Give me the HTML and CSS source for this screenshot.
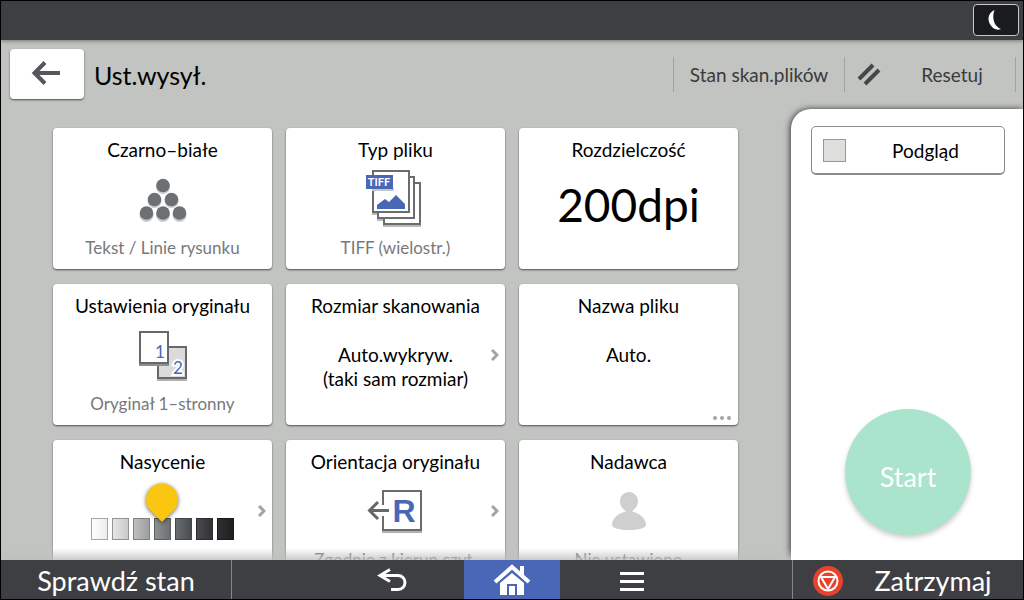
FILE: index.html
```html
<!DOCTYPE html>
<html lang="pl">
<head>
<meta charset="utf-8">
<title>Ust.wysył.</title>
<link rel="stylesheet" href="styles.css">
</head>
<body>
<div class="screen">
  <div class="statusbar">
    <button class="sleep" aria-label="Tryb uśpienia">
      <svg width="16" height="22" viewBox="0 0 16 22"><path d="M6.500 1C0 4 -1 11 2.500 16C5 20.500 9.500 21.500 13 20C6 17.500 3.500 8.500 6.500 1Z" fill="#fff"/></svg>
    </button>
  </div>

  <header class="header">
    <button class="back" aria-label="Wstecz">
      <svg width="34" height="26" viewBox="0 0 34 26" fill="none" stroke="#55575a" stroke-width="4"><path d="M30 12H5M15 1.500L4.500 12L15 22.500"/></svg>
    </button>
    <h1 class="title">Ust.wysył.</h1>
    <div class="tools">
      <button class="tool">Stan skan.plików</button>
      <button class="tool tool-reset">
        <svg width="24" height="24" viewBox="0 0 24 24" stroke="#454647" stroke-width="4"><path d="M2 16L16 2M8 21L22 7"/></svg>
        <span class="tool-label">Resetuj</span>
      </button>
    </div>
  </header>

  <main class="main">
    <section class="settings">
      <button class="card">
        <span class="card-title">Czarno–białe</span>
        <span class="card-body">
          <svg width="52" height="48" viewBox="0 0 52 48">
            <g fill="#c9caca"><circle cx="26" cy="12" r="7"/><circle cx="17.500" cy="26" r="7"/><circle cx="34.500" cy="26" r="7"/><circle cx="9.500" cy="40" r="7"/><circle cx="26" cy="40" r="7"/><circle cx="42.500" cy="40" r="7"/></g>
            <g fill="#6c7072"><circle cx="26" cy="10.500" r="6.800"/><circle cx="17.500" cy="24.500" r="6.800"/><circle cx="34.500" cy="24.500" r="6.800"/><circle cx="9.500" cy="38" r="6.800"/><circle cx="26" cy="38" r="6.800"/><circle cx="42.500" cy="38" r="6.800"/></g>
          </svg>
        </span>
        <span class="card-note">Tekst / Linie rysunku</span>
      </button>

      <button class="card">
        <span class="card-title">Typ pliku</span>
        <span class="card-body">
          <svg width="62" height="60" viewBox="1 1 62 60">
            <g fill="#b9baba"><rect x="19" y="56" width="38" height="3"/><rect x="13" y="50" width="38" height="3"/><rect x="8" y="44" width="38" height="3"/></g>
            <g fill="#fff" stroke="#6a6c6e" stroke-width="2"><rect x="20" y="15" width="36" height="41"/><rect x="14" y="9" width="36" height="41"/><rect x="9" y="3" width="36" height="41"/></g>
            <path d="M13 41V37L21 31L25 34L32 27L41 36V41Z" fill="#4a67b7"/>
            <rect x="8" y="20" width="22" height="3" fill="#c5c6c6"/>
            <rect x="2" y="7" width="27" height="14" fill="#4a67b7"/>
            <text class="badge-text" x="15" y="18" text-anchor="middle">TIFF</text>
          </svg>
        </span>
        <span class="card-note">TIFF (wielostr.)</span>
      </button>

      <button class="card">
        <span class="card-title">Rozdzielczość</span>
        <span class="card-body card-big">200dpi</span>
        <span class="card-note"></span>
      </button>

      <button class="card">
        <span class="card-title">Ustawienia oryginału</span>
        <span class="card-body">
          <svg width="50" height="52" viewBox="0 0 50 52">
            <rect x="19" y="49" width="30" height="3" fill="#b0b1b1"/>
            <rect x="20" y="18" width="28" height="31" fill="#dadbda" stroke="#66686b" stroke-width="2"/>
            <rect x="1" y="33" width="30" height="4" fill="#8d8f90"/>
            <rect x="2" y="3" width="28" height="31" fill="#fff" stroke="#66686b" stroke-width="2"/>
            <text class="page-no" x="22" y="29" text-anchor="middle">1</text>
            <text class="page-no page-no-back" x="40" y="45" text-anchor="middle">2</text>
          </svg>
        </span>
        <span class="card-note">Oryginał 1–stronny</span>
      </button>

      <button class="card">
        <span class="card-title">Rozmiar skanowania</span>
        <span class="card-body card-value">Auto.wykryw.<br>(taki sam rozmiar)</span>
        <span class="card-note"></span>
        <svg class="chevron" width="8" height="12" viewBox="0 0 8 12"><path d="M1 1L6 6L1 11"/></svg>
      </button>

      <button class="card">
        <span class="card-title">Nazwa pliku</span>
        <span class="card-body card-value">Auto.</span>
        <span class="card-note"></span>
        <svg class="more" width="18" height="4" viewBox="0 0 18 4" fill="#a3a4a4"><circle cx="2" cy="2" r="2"/><circle cx="9" cy="2" r="2"/><circle cx="16" cy="2" r="2"/></svg>
      </button>

      <button class="card">
        <span class="card-title">Nasycenie</span>
        <span class="card-body">
          <svg width="148" height="64" viewBox="0 0 148 64">
            <defs>
              <linearGradient id="d1"><stop offset="0" stop-color="#fff"/><stop offset="1" stop-color="#ececec"/></linearGradient>
              <linearGradient id="d2"><stop offset="0" stop-color="#e6e6e5"/><stop offset="1" stop-color="#c8c9c8"/></linearGradient>
              <linearGradient id="d3"><stop offset="0" stop-color="#c0c1c1"/><stop offset="1" stop-color="#9a9c9d"/></linearGradient>
              <linearGradient id="d4"><stop offset="0" stop-color="#8f9293"/><stop offset="1" stop-color="#6c6f72"/></linearGradient>
              <linearGradient id="d5"><stop offset="0" stop-color="#6a6e71"/><stop offset="1" stop-color="#484b4f"/></linearGradient>
              <linearGradient id="d6"><stop offset="0" stop-color="#4a4c4f"/><stop offset="1" stop-color="#303134"/></linearGradient>
              <linearGradient id="d7"><stop offset="0" stop-color="#303032"/><stop offset="1" stop-color="#1e1e1f"/></linearGradient>
            </defs>
            <rect x="2.500" y="39.500" width="16" height="21" fill="url(#d1)" stroke="#a4a5a5"/>
            <rect x="23.500" y="39.500" width="16" height="21" fill="url(#d2)" stroke="#929393"/>
            <rect x="44.500" y="39.500" width="16" height="21" fill="url(#d3)" stroke="#7e8081"/>
            <rect x="65.500" y="39.500" width="16" height="21" fill="url(#d4)" stroke="#5c5f61"/>
            <rect x="86.500" y="39.500" width="16" height="21" fill="url(#d5)" stroke="#434649"/>
            <rect x="107.500" y="39.500" width="16" height="21" fill="url(#d6)" stroke="#2b2c2e"/>
            <rect x="128.500" y="39.500" width="16" height="21" fill="url(#d7)" stroke="#1b1b1c"/>
            <path class="pin" d="M73 43L61 31C57 27 57 22 57 20.500A16 16 0 0 1 89 20.500C89 24 88 28 85 31Z"/>
          </svg>
        </span>
        <span class="card-note"></span>
        <svg class="chevron" width="8" height="12" viewBox="0 0 8 12"><path d="M1 1L6 6L1 11"/></svg>
      </button>

      <button class="card">
        <span class="card-title">Orientacja oryginału</span>
        <span class="card-body">
          <svg width="60" height="44" viewBox="0 0 60 44">
            <rect x="16" y="41" width="40" height="3" fill="#b0b1b1"/>
            <path d="M17 16V2H55V41H17V27" fill="none" stroke="#6a6c6e" stroke-width="2"/>
            <path d="M23 21.500H4M12 13L3.500 21.500L12 30" fill="none" stroke="#66686b" stroke-width="3"/>
            <text class="letter-r" x="38" y="33" text-anchor="middle">R</text>
          </svg>
        </span>
        <span class="card-note">Zgodnie z kierun.czyt.</span>
        <svg class="chevron" width="8" height="12" viewBox="0 0 8 12"><path d="M1 1L6 6L1 11"/></svg>
      </button>

      <button class="card">
        <span class="card-title">Nadawca</span>
        <span class="card-body">
          <svg width="36" height="40" viewBox="0 0 36 40" fill="#cfcfcf"><path d="M18 1C13 1 9 5 9 10C9 15 12 18 15 20.500C8 22 1 27 1 34C1 37.500 9 39 18 39S35 37.500 35 34C35 27 28 22 21 20.500C24 18 27 15 27 10C27 5 23 1 18 1Z"/></svg>
        </span>
        <span class="card-note">Nie ustawiono</span>
      </button>
    </section>

    <aside class="panel">
      <label class="preview"><input class="preview-box" type="checkbox"><span class="preview-label">Podgląd</span></label>
      <button class="start">Start</button>
    </aside>
  </main>

  <footer class="footer">
    <button class="foot-side foot-left">Sprawdź stan</button>
    <nav class="nav">
      <button class="nav-button" aria-label="Powrót">
        <svg width="32" height="24" viewBox="0 0 32 24" fill="none" stroke="#fff" stroke-width="3"><path d="M4 7.500H22A7 7 0 0 1 22 21.500H15M14 1.500L4 7.500L14 13.500"/></svg>
      </button>
      <button class="nav-button nav-home" aria-label="Ekran główny">
        <svg width="38" height="32" viewBox="0 0 38 32"><path d="M2 18L19 3L36 18" fill="none" stroke="#fff" stroke-width="4"/><rect x="27" y="2" width="4" height="9" fill="#fff"/><path d="M19 9L31 19V31H24V20H14V31H7V19ZM16 22H22V31H16Z" fill="#fff" fill-rule="evenodd"/></svg>
      </button>
      <button class="nav-button" aria-label="Menu">
        <svg width="24" height="22" viewBox="0 0 24 22" fill="#fff"><rect y="3" width="24" height="3"/><rect y="11" width="24" height="3"/><rect y="19" width="24" height="3"/></svg>
      </button>
    </nav>
    <button class="foot-side foot-right">
      <svg width="30" height="30" viewBox="0 0 30 30" fill="none" stroke="#fff" stroke-width="2"><circle cx="15" cy="15" r="15" fill="#e8432a" stroke="none"/><circle cx="15" cy="15" r="9.500"/><path d="M8 11H22L15 23Z"/></svg>
      <span class="foot-label">Zatrzymaj</span>
    </button>
  </footer>
</div>
</body>
</html>
```

FILE: styles.css
```css
* { box-sizing: border-box; }

body {
  margin: 0;
  font-family: Lato, "Noto Sans", sans-serif;
  font-size: 19px;
  color: #111;
}

button {
  margin: 0;
  padding: 0;
  border: 0;
  background: none;
  color: inherit;
  font: inherit;
  cursor: pointer;
}

svg { display: block; flex: none; }

.screen {
  display: flex;
  flex-direction: column;
  height: 100vh;
  border: 1px solid #000;
  background: #c2c4c1;
  overflow: hidden;
}

.statusbar {
  display: flex;
  flex: none;
  justify-content: flex-end;
  align-items: center;
  height: 39px;
  padding: 0 4px 2px;
  background: #3e3f42;
  box-shadow: 0 1px 4px rgba(0, 0, 0, 0.4);
}

.sleep {
  display: flex;
  justify-content: center;
  align-items: center;
  width: 46px;
  height: 32px;
  border: 1px solid #c8c8c8;
  border-radius: 4px;
  background: #1a1b1d;
}

.header {
  display: flex;
  flex: none;
  align-items: center;
  height: 69px;
  padding: 0 7px 0 9px;
}

.back {
  display: flex;
  justify-content: center;
  align-items: center;
  width: 74px;
  height: 50px;
  margin-bottom: 2px;
  border-radius: 4px;
  background: #fff;
  box-shadow: 0 1px 2px rgba(0, 0, 0, 0.6);
}

.title {
  margin: 0 auto 0 10px;
  font-size: 25px;
  font-weight: 400;
  color: #000;
}

.tools {
  display: flex;
  border-right: 1px solid #a2a4a2;
}

.tool {
  width: 171px;
  height: 35px;
  border-left: 1px solid #a2a4a2;
  color: #3a3b3c;
}

.tool-reset {
  display: flex;
  align-items: center;
  padding: 0 12px;
}

.tool-label { flex: 1; padding-left: 20px; }

.main {
  display: flex;
  flex: 1;
  min-height: 0;
}

.settings {
  position: relative;
  display: grid;
  flex: 1;
  grid-template-columns: repeat(3, 1fr);
  grid-auto-rows: 141px;
  gap: 15px 14px;
  padding: 19px 53px 0 52px;
  overflow: hidden;
}

.settings::after {
  content: "";
  position: absolute;
  right: 0;
  bottom: 0;
  left: 0;
  height: 12px;
  background: linear-gradient(rgba(190, 192, 189, 0), rgba(190, 192, 189, 0.8));
}

.card {
  position: relative;
  display: flex;
  flex-direction: column;
  align-items: center;
  padding: 9px 4px 8px;
  border-radius: 4px;
  background: #fff;
  box-shadow: 0 1px 2px rgba(0, 0, 0, 0.6);
  color: #000;
}

.card-title { line-height: 26px; }

.card-body {
  display: flex;
  flex: 1;
  justify-content: center;
  align-items: center;
}

.card-note {
  height: 26px;
  line-height: 26px;
  font-size: 17px;
  color: #77797a;
}

.card-big { font-size: 46px; line-height: 60px; padding-top: 12px; }

.card-value {
  align-items: flex-start;
  padding-top: 24px;
  line-height: 24px;
}

.chevron {
  position: absolute;
  top: 65px;
  right: 6px;
  fill: none;
  stroke: #a3a4a4;
  stroke-width: 3px;
}

.more {
  position: absolute;
  right: 7px;
  bottom: 5px;
}

.badge-text { font-size: 11px; font-weight: 700; fill: #fff; }
.page-no { font-size: 17px; fill: #4a67b7; }
.page-no-back { stroke: #fff; stroke-width: 4px; paint-order: stroke; }
.letter-r { font-family: "Liberation Sans", sans-serif; font-size: 32px; font-weight: 700; fill: #4a67b7; }
.pin { fill: #fbc60f; filter: drop-shadow(0 1px 2px rgba(0, 0, 0, 0.6)); }

.panel {
  display: flex;
  flex-direction: column;
  flex: none;
  justify-content: space-between;
  width: 232px;
  padding: 17px 18px 25px 20px;
  border-top-left-radius: 20px;
  background: #fff;
  box-shadow: -1px 0 6px rgba(0, 0, 0, 0.7);
}

.preview {
  display: flex;
  align-items: center;
  height: 49px;
  padding: 0 11px;
  border: 1px solid #8b8c8c;
  border-bottom-width: 2px;
  border-radius: 5px;
  color: #000;
}

.preview-box {
  appearance: none;
  width: 23px;
  height: 23px;
  margin: 0;
  border: 1px solid #979898;
  background: #dededd;
}

.preview-label { flex: 1; padding-left: 12px; text-align: center; }

.start {
  align-self: center;
  width: 126px;
  height: 126px;
  padding-top: 8px;
  border-radius: 50%;
  background: #aae4cc;
  box-shadow: 0 3px 5px rgba(0, 0, 0, 0.2);
  color: #fff;
  font-size: 27px;
}

.footer {
  display: flex;
  flex: none;
  height: 39px;
  background: #3e3f42;
  color: #fff;
}

.foot-side {
  width: 231px;
  padding-top: 2px;
  font-size: 27px;
  line-height: 37px;
}

.foot-left { border-right: 1px solid #85868a; }

.foot-right {
  display: flex;
  align-items: center;
  padding-left: 20px;
  border-left: 1px solid #85868a;
}

.foot-label { flex: 1; }

.nav {
  display: flex;
  flex: 1;
  justify-content: center;
  gap: 24px;
}

.nav-button {
  display: flex;
  justify-content: center;
  align-items: center;
  width: 96px;
}

.nav-home { background: #4a67b7; }
```
